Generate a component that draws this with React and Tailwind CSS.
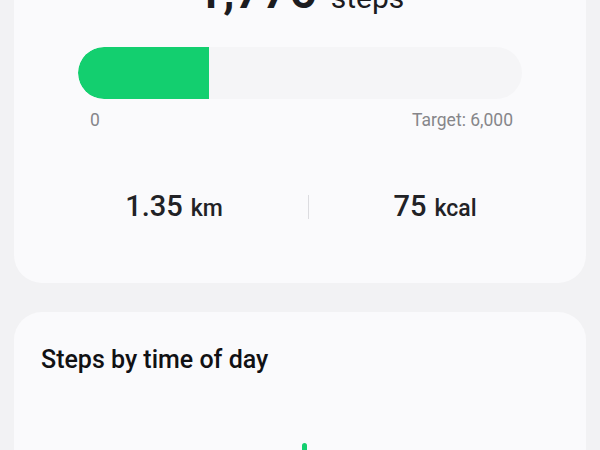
import React from "react";

const hourly = [0, 0, 0, 0, 0, 0, 0, 0, 40, 60, 30, 80, 100, 20, 10, 0, 0, 0, 0, 0, 0, 0, 0, 0];

const Stat = ({ value, unit, className = "" }) => (
  <div className={`flex items-baseline justify-center gap-2 text-[#222226] ${className}`}>
    <span className="text-[29px] leading-none font-medium">{value}</span>
    <span className="text-[23px] leading-none font-medium">{unit}</span>
  </div>
);

export default function App() {
  const steps = 1776;
  const target = 6000;
  const pct = (steps / target) * 100;
  const max = Math.max(...hourly);

  return (
    <div className="h-[450px] overflow-hidden bg-[#f2f2f4] px-[14px] font-['Roboto',sans-serif]">
      <div className="-mt-[60px]">
        {/* Today's steps */}
        <div className="rounded-[28px] bg-[#fafafc] pt-7 pb-[62px]">
          <div className="flex items-baseline justify-center gap-[14px] text-[#1c1c1f]">
            <span className="text-[48px] leading-none font-semibold">1,776</span>
            <span className="text-[30px] leading-none">steps</span>
          </div>

          <div className="px-16">
            <div className="mt-[31px] h-[52px] overflow-hidden rounded-full bg-[#f5f5f7]">
              <div className="h-full rounded-l-full bg-[#13cf6f]" style={{ width: `${pct}%` }} />
            </div>
            <div className="mt-[11px] flex justify-between pl-3 pr-[9px] text-[17.5px] leading-5 text-[#86868a]">
              <span>0</span>
              <span>Target: 6,000</span>
            </div>
          </div>

          <div className="mt-[62px] ml-[26px] flex items-center">
            <Stat value="1.35" unit="km" className="w-[268px]" />
            <div className="h-6 w-px bg-[#dcdce0]" />
            <Stat value="75" unit="kcal" className="w-[252px]" />
          </div>
        </div>

        {/* Steps by time of day */}
        <div className="mt-[29px] rounded-[28px] bg-[#fafafc] px-[27px] pt-[35px] pb-8">
          <h2 className="text-[25px] leading-none font-medium text-[#111114]">Steps by time of day</h2>
          <div className="mt-[71px] flex h-[100px] w-[506px] items-end">
            {hourly.map((v, i) => (
              <div key={i} className="flex h-full flex-1 items-end justify-center">
                {v > 0 && (
                  <div
                    className="w-[5px] rounded-t-full bg-[#13cf6f]"
                    style={{ height: `${(v / max) * 100}%` }}
                  />
                )}
              </div>
            ))}
          </div>
        </div>
      </div>
    </div>
  );
}
